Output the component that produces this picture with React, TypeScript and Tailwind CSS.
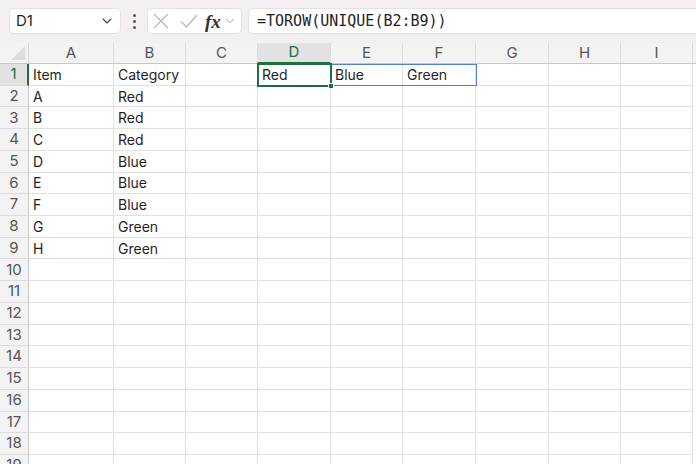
import { ChevronDown } from 'lucide-react'
import clsx from 'clsx'

const cols = [
  { key: 'A', w: 'w-[85px]' },
  { key: 'B', w: 'w-[72px]' },
  { key: 'C', w: 'w-[72px]' },
  { key: 'D', w: 'w-[73px]' },
  { key: 'E', w: 'w-[72px]' },
  { key: 'F', w: 'w-[73px]' },
  { key: 'G', w: 'w-[73px]' },
  { key: 'H', w: 'w-[72px]' },
  { key: 'I', w: 'w-[72px]' },
]

const data: Record<number, string[]> = {
  1: ['Item', 'Category', '', 'Red', 'Blue', 'Green'],
  2: ['A', 'Red'],
  3: ['B', 'Red'],
  4: ['C', 'Red'],
  5: ['D', 'Blue'],
  6: ['E', 'Blue'],
  7: ['F', 'Blue'],
  8: ['G', 'Green'],
  9: ['H', 'Green'],
}

const rows = Array.from({ length: 19 }, (_, i) => i + 1)

export default function App() {
  return (
    <div className="w-[696px] h-[464px] overflow-hidden bg-white font-['Inter',sans-serif] text-[#1f1f1f]">
      {/* formula bar */}
      <div className="h-[43px] bg-[#f4eff2] flex items-start pt-[8px] pl-[9px] gap-[6px]">
        <div className="w-[112px] h-[26px] bg-white rounded-[5px] border border-[#e6e1e4] flex items-center pl-[6px] pr-[5px]">
          <span className="flex-1 text-[15px]">D1</span>
          <ChevronDown size={16} strokeWidth={1.6} className="text-[#444]" />
        </div>
        <div className="w-[14px] h-[26px] flex flex-col items-center justify-center gap-[3px]">
          <span className="w-[3px] h-[3px] rounded-full bg-[#555]" />
          <span className="w-[3px] h-[3px] rounded-full bg-[#555]" />
          <span className="w-[3px] h-[3px] rounded-full bg-[#555]" />
        </div>
        <div className="w-[95px] h-[26px] bg-white rounded-[5px] border border-[#e6e1e4] flex items-center pl-[5px]">
          <svg width="16" height="16" viewBox="0 0 16 16" className="text-[#b8b8b8]">
            <path d="M1 1L15 15M15 1L1 15" stroke="currentColor" strokeWidth="1.2" fill="none" />
          </svg>
          <svg width="18" height="16" viewBox="0 0 18 16" className="text-[#b8b8b8] ml-[11px]">
            <path d="M1 8.5L6.5 14L17 2" stroke="currentColor" strokeWidth="1.2" fill="none" />
          </svg>
          <span className="flex items-center ml-[7px]">
            <span className="font-['Liberation_Serif',serif] italic font-bold text-[19px] text-[#333] leading-none">fx</span>
            <ChevronDown size={14} strokeWidth={1.4} className="text-[#888] ml-[2px]" />
          </span>
        </div>
        <div className="flex-1 h-[26px] bg-white rounded-l-[5px] border border-r-0 border-[#e6e1e4] flex items-center pl-[8px]">
          <span className="font-['DejaVu_Sans_Mono',monospace] text-[15px]">=TOROW(UNIQUE(B2:B9))</span>
        </div>
      </div>

      {/* column headers */}
      <div className="flex h-[21px] bg-[#f3f3f3] border-b border-[#c6c6c6]">
        <div className="w-[29px] relative border-r border-[#d9d9d9]">
          <div className="absolute right-[3px] bottom-[3px] w-0 h-0 border-l-[14px] border-l-transparent border-b-[14px] border-b-[#dcdcdc]" />
        </div>
        {cols.map(c => (
          <div
            key={c.key}
            className={clsx(
              c.w,
              'shrink-0 flex items-center justify-center text-[15px] border-r border-[#dcdcdc]',
              c.key === 'D' ? 'bg-[#e2e2e2] text-[#1b6b3f] border-b-2 border-b-[#1d6f42] -mb-px' : 'text-[#555]'
            )}
          >
            {c.key}
          </div>
        ))}
      </div>

      {/* rows */}
      <div className="relative">
        {rows.map(r => (
          <div key={r} className="flex h-[21.73px]">
            <div
              className={clsx(
                'w-[29px] shrink-0 flex items-center justify-center text-[15px] border-b border-[#dcdcdc]',
                r === 1 ? 'bg-[#e2e2e2] text-[#1b6b3f] border-r-2 border-r-[#1d6f42]' : 'bg-[#f3f3f3] text-[#555] border-r border-r-[#c6c6c6]'
              )}
            >
              {r}
            </div>
            {cols.map((c, i) => (
              <div
                key={c.key}
                className={clsx(c.w, 'shrink-0 flex items-center pl-[4px] text-[14px] border-r border-b border-[#e1e1e1]')}
              >
                {data[r]?.[i] ?? ''}
              </div>
            ))}
          </div>
        ))}

        {/* spill range outline D1:F1 */}
        <div className="absolute left-[258px] top-0 w-[219px] h-[22px] border border-[#4f7fd6] pointer-events-none" />
        {/* active cell D1 */}
        <div className="absolute left-[257px] -top-px w-[75px] h-[24px] border-2 border-[#1d6f42] pointer-events-none">
          <div className="absolute -right-[4px] -bottom-[4px] w-[6px] h-[6px] bg-[#1d6f42] border border-white" />
        </div>
      </div>
    </div>
  )
}
